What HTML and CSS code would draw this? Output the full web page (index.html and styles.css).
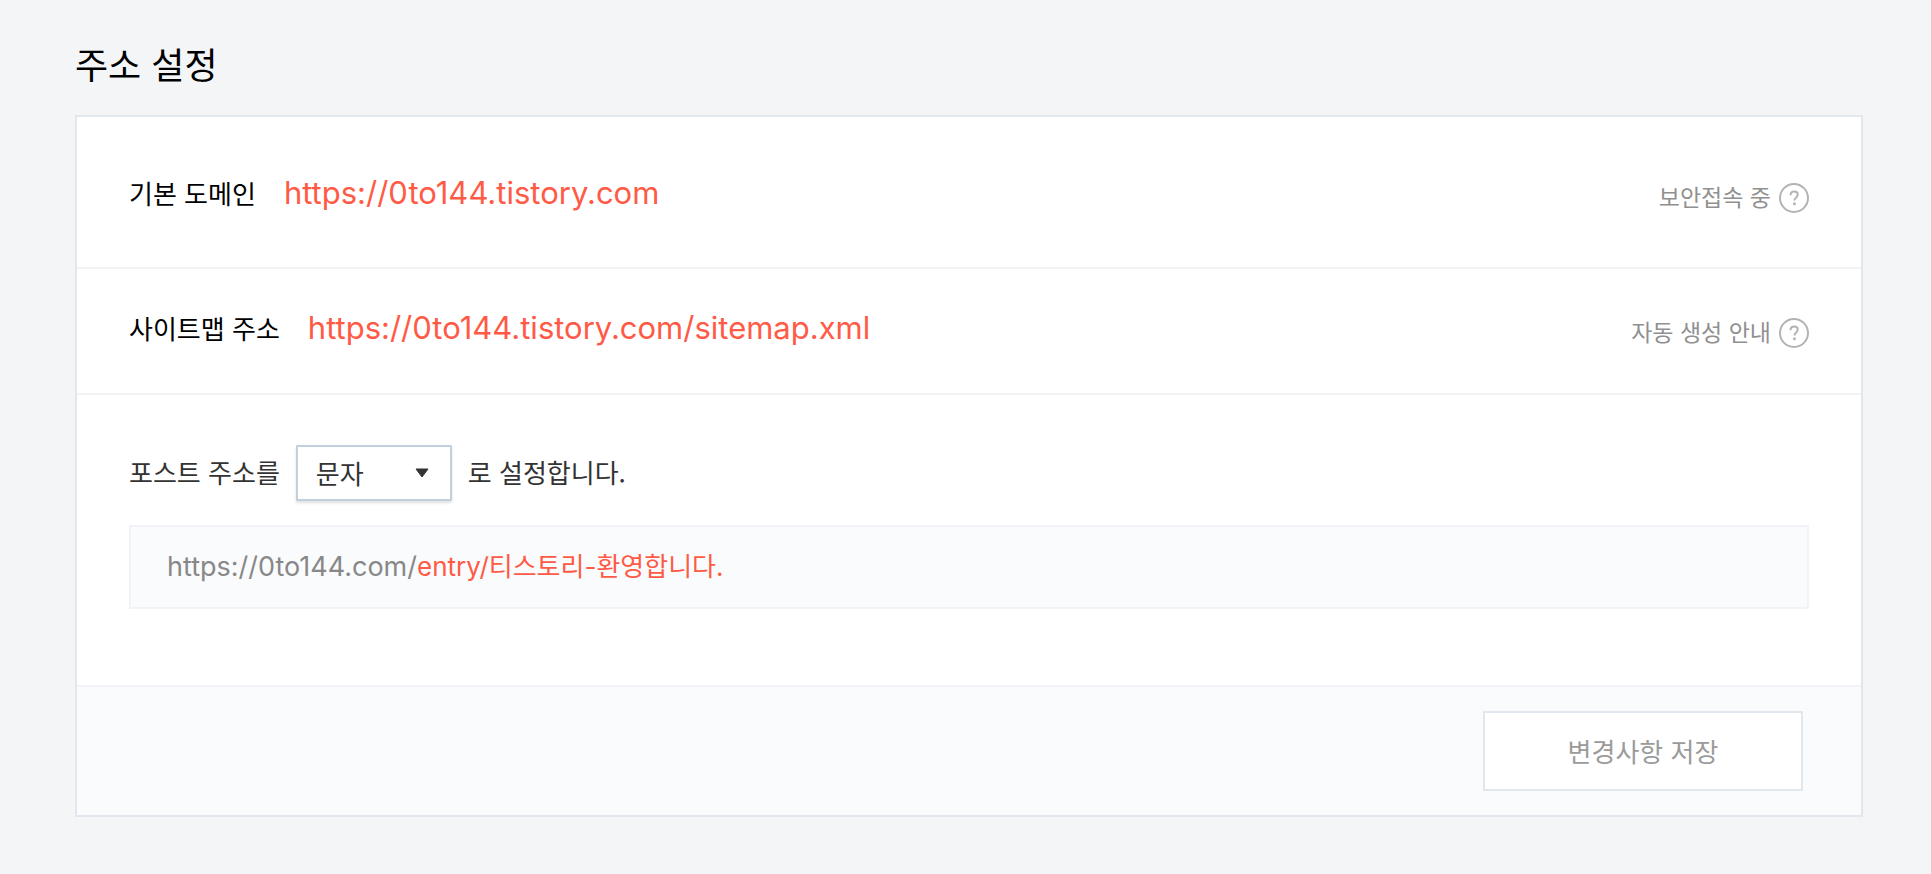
FILE: index.html
```html
<!DOCTYPE html>
<html lang="ko">
<head>
    <meta charset="UTF-8">
    <meta name="viewport" content="width=device-width, initial-scale=1.0">
    <title>주소 설정</title>
    <link rel="stylesheet" href="styles.css">
</head>
<body>
    <main class="container">
        <h1>주소 설정</h1>

        <form class="card">
            <div class="row row-domain">
                <div class="address">
                    <strong>기본 도메인</strong>
                    <a href="https://0to144.tistory.com">https://0to144.tistory.com</a>
                </div>
                <div class="help">
                    <span>보안접속 중</span>
                    <button type="button" class="help-btn" aria-label="보안접속 도움말">
                        <svg viewBox="0 0 30 30" fill="none" stroke="#b3b3b3" stroke-width="2">
                            <circle cx="15" cy="15" r="14"/>
                            <path d="M11.5 12.2c0-2.4 1.5-3.8 3.7-3.8s3.6 1.3 3.6 3.2c0 2.9-3.4 2.9-3.4 6"/>
                            <path d="M14.1 20.8h2.6" stroke-width="2.6"/>
                        </svg>
                    </button>
                </div>
            </div>

            <div class="row row-sitemap">
                <div class="address">
                    <strong>사이트맵 주소</strong>
                    <a href="https://0to144.tistory.com/sitemap.xml">https://0to144.tistory.com/sitemap.xml</a>
                </div>
                <div class="help">
                    <span>자동 생성 안내</span>
                    <button type="button" class="help-btn" aria-label="자동 생성 도움말">
                        <svg viewBox="0 0 30 30" fill="none" stroke="#b3b3b3" stroke-width="2">
                            <circle cx="15" cy="15" r="14"/>
                            <path d="M11.5 12.2c0-2.4 1.5-3.8 3.7-3.8s3.6 1.3 3.6 3.2c0 2.9-3.4 2.9-3.4 6"/>
                            <path d="M14.1 20.8h2.6" stroke-width="2.6"/>
                        </svg>
                    </button>
                </div>
            </div>

            <div class="row-post">
                <div class="post-type">
                    <label for="postType">포스트 주소를</label>
                    <div class="select-box">
                        <select id="postType">
                            <option selected>문자</option>
                            <option>숫자</option>
                        </select>
                        <svg class="arrow" viewBox="0 0 14 10"><path d="M1 1h12L7 9z" fill="#333" stroke="#333" stroke-linejoin="round"/></svg>
                    </div>
                    <span>로 설정합니다.</span>
                </div>
                <p class="preview">https://0to144.com/<em>entry/티스토리-환영합니다.</em></p>
            </div>

            <div class="card-footer">
                <button type="submit" class="save-btn">변경사항 저장</button>
            </div>
        </form>
    </main>
</body>
</html>
```
FILE: styles.css
```css
* {
    margin: 0;
    padding: 0;
    box-sizing: border-box;
}

body {
    font-family: 'Noto Sans CJK KR', sans-serif;
    font-size: 26px;
    line-height: 40px;
    background: #f3f5f7;
    color: #333;
}

.container {
    padding: 35px 68px 56px 75px;
}

h1 {
    font-size: 36px;
    font-weight: 400;
    line-height: 56px;
    margin-bottom: 24px;
    color: #000;
}

.card {
    border: 2px solid #e1e7ee;
    background: #fff;
}

.row {
    display: flex;
    align-items: center;
    justify-content: space-between;
    padding: 0 52px;
    border-bottom: 2px solid #f1f3f6;
}

.row-domain {
    height: 152px;
    padding-top: 2px;
}

.row-sitemap {
    height: 126px;
    padding-bottom: 6px;
}

.address {
    display: flex;
    align-items: center;
    gap: 28px;
}

.address strong {
    font-weight: 400;
    color: #000;
}

.address a {
    font-family: Inter, 'Noto Sans CJK KR', sans-serif;
    font-size: 31px;
    color: #ff5a45;
    text-decoration: none;
}

.help {
    display: flex;
    align-items: flex-end;
    gap: 8px;
    padding-top: 6px;
    font-size: 23px;
    line-height: 34px;
    color: #909090;
}

.help-btn {
    width: 30px;
    height: 30px;
    border: none;
    background: none;
    cursor: pointer;
}

.help-btn svg {
    display: block;
}

.row-post {
    padding: 50px 52px 76px;
}

.post-type {
    display: flex;
    align-items: center;
    gap: 16px;
    margin-bottom: 24px;
}

.post-type label,
.post-type span {
    padding-bottom: 2px;
}

.select-box {
    position: relative;
}

.select-box select {
    display: block;
    width: 156px;
    height: 56px;
    padding: 0 18px 2px;
    border: 2px solid #c3cfda;
    border-radius: 1px;
    background: #fff;
    box-shadow: 0 2px 3px rgba(0, 0, 0, 0.12);
    font-family: inherit;
    font-size: 26px;
    color: #333;
    appearance: none;
    cursor: pointer;
}

.arrow {
    position: absolute;
    top: 23px;
    right: 23px;
    width: 14px;
    height: 10px;
    pointer-events: none;
}

.preview {
    padding: 20px 36px;
    border: 2px solid #f1f3f6;
    background: #fafbfd;
    font-family: Inter, 'Noto Sans CJK KR', sans-serif;
    font-size: 27px;
    color: #888;
}

.preview em {
    font-size: 26px;
    font-style: normal;
    color: #ff5a45;
}

.card-footer {
    display: flex;
    justify-content: flex-end;
    padding: 24px 58px;
    border-top: 2px solid #f1f3f6;
    background: #fafbfd;
}

.save-btn {
    width: 320px;
    height: 80px;
    padding-bottom: 2px;
    border: 2px solid #e1e7ee;
    background: #fff;
    font-family: inherit;
    font-size: 26px;
    color: #9b9b9b;
    cursor: pointer;
}
```
